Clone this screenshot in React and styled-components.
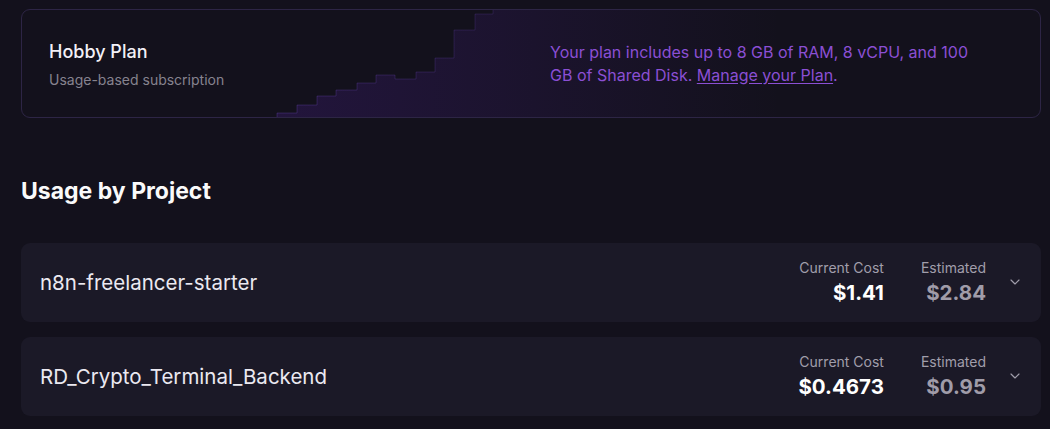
import React from "react";
import styled, { createGlobalStyle } from "styled-components";
import { ChevronDown } from "lucide-react";

const Global = createGlobalStyle`
  html, body { margin: 0; padding: 0; background: #13111c; }
  body { font-family: Inter, "Noto Sans", sans-serif; -webkit-font-smoothing: antialiased; }
  * { box-sizing: border-box; }
`;

const Page = styled.div`
  padding: 9px 9px 0 21px;
  display: flex;
  flex-direction: column;
`;

const PlanCard = styled.section`
  position: relative;
  overflow: hidden;
  height: 109px;
  border: 1px solid #2d2545;
  border-radius: 9px;
  display: flex;
  align-items: center;
  padding: 0 28px 0 27px;
`;

const Stairs = styled.svg`
  position: absolute;
  inset: 0;
  width: 100%;
  height: 100%;
  pointer-events: none;
`;

const PlanInfo = styled.div`
  position: relative;
  width: 501px;
  display: flex;
  flex-direction: column;
  gap: 8px;
  margin-top: 2px;
`;

const PlanTitle = styled.div`
  color: #f2f0f7;
  font-size: 18px;
  font-weight: 500;
  line-height: 22px;
`;

const PlanSub = styled.div`
  color: #86838f;
  font-size: 14px;
  line-height: 18px;
`;

const PlanNote = styled.p`
  position: relative;
  margin: 0;
  width: 428px;
  color: #8b4fd4;
  font-size: 16px;
  line-height: 23px;

  a {
    color: inherit;
    text-decoration: underline;
    text-underline-offset: 2px;
  }
`;

const Heading = styled.h2`
  margin: 59px 0 0;
  color: #fafafa;
  font-size: 23px;
  font-weight: 700;
  line-height: 29px;
`;

const List = styled.div`
  margin-top: 37px;
  display: flex;
  flex-direction: column;
  gap: 15px;
`;

const Row = styled.div`
  height: 79px;
  border-radius: 9px;
  background: #1b1927;
  display: flex;
  align-items: center;
  padding: 0 18px 0 19px;
`;

const ProjectName = styled.div`
  flex: 1;
  color: #ebe9f1;
  font-size: 20.5px;
  font-weight: 400;
`;

const Cost = styled.div`
  display: flex;
  flex-direction: column;
  align-items: flex-end;
  margin-left: ${(p) => p.$gap}px;
`;

const CostLabel = styled.div`
  color: #a19eab;
  font-size: 14px;
  line-height: 18px;
`;

const CostValue = styled.div`
  color: ${(p) => (p.$muted ? "#a09ca9" : "#ffffff")};
  font-size: 20.5px;
  font-weight: 700;
  line-height: 26px;
  margin-top: 3px;
`;

const Toggle = styled.button`
  margin-left: 21px;
  margin-top: -2px;
  padding: 0;
  border: 0;
  background: none;
  color: #a09daa;
  display: flex;
  cursor: pointer;
`;

const projects = [
  { name: "n8n-freelancer-starter", current: "$1.41", estimated: "$2.84" },
  { name: "RD_Crypto_Terminal_Backend", current: "$0.4673", estimated: "$0.95" },
];

const steps = [
  [255, 108], [255, 103], [275, 103], [275, 95], [295, 95], [295, 86],
  [314, 86], [314, 80], [335, 80], [335, 73], [354, 73], [354, 65],
  [373, 65], [373, 69], [394, 69], [394, 62], [413, 62], [413, 48],
  [432, 48], [432, 20], [453, 20], [453, 4], [471, 4], [471, 0],
];

function StairGraphic() {
  const edge = steps.map((p, i) => `${i ? "L" : "M"}${p[0]} ${p[1]}`).join(" ");
  const area = `${edge} L1018 0 L1018 108 Z`;
  return (
    <Stairs viewBox="0 0 1018 107" preserveAspectRatio="none">
      <defs>
        <linearGradient id="stairFill" x1="255" y1="0" x2="760" y2="0" gradientUnits="userSpaceOnUse">
          <stop offset="0" stopColor="#6d28d9" stopOpacity="0.17" />
          <stop offset="0.45" stopColor="#6d28d9" stopOpacity="0.1" />
          <stop offset="1" stopColor="#6d28d9" stopOpacity="0" />
        </linearGradient>
        <linearGradient id="stairEdge" x1="255" y1="0" x2="520" y2="0" gradientUnits="userSpaceOnUse">
          <stop offset="0" stopColor="#8b5cf6" stopOpacity="0.22" />
          <stop offset="1" stopColor="#8b5cf6" stopOpacity="0.12" />
        </linearGradient>
      </defs>
      <path d={area} fill="url(#stairFill)" />
      <path d={edge} fill="none" stroke="url(#stairEdge)" strokeWidth="1" />
    </Stairs>
  );
}

export default function App() {
  return (
    <>
      <Global />
      <Page>
        <PlanCard>
          <StairGraphic />
          <PlanInfo>
            <PlanTitle>Hobby Plan</PlanTitle>
            <PlanSub>Usage-based subscription</PlanSub>
          </PlanInfo>
          <PlanNote>
            Your plan includes up to 8 GB of RAM, 8 vCPU, and 100 GB of Shared Disk.{" "}
            <a href="#plan">Manage your Plan</a>.
          </PlanNote>
        </PlanCard>

        <Heading>Usage by Project</Heading>

        <List>
          {projects.map((p) => (
            <Row key={p.name}>
              <ProjectName>{p.name}</ProjectName>
              <Cost $gap={0}>
                <CostLabel>Current Cost</CostLabel>
                <CostValue>{p.current}</CostValue>
              </Cost>
              <Cost $gap={37}>
                <CostLabel>Estimated</CostLabel>
                <CostValue $muted>{p.estimated}</CostValue>
              </Cost>
              <Toggle aria-label="Expand">
                <ChevronDown size={16} strokeWidth={1.75} />
              </Toggle>
            </Row>
          ))}
        </List>
      </Page>
    </>
  );
}
